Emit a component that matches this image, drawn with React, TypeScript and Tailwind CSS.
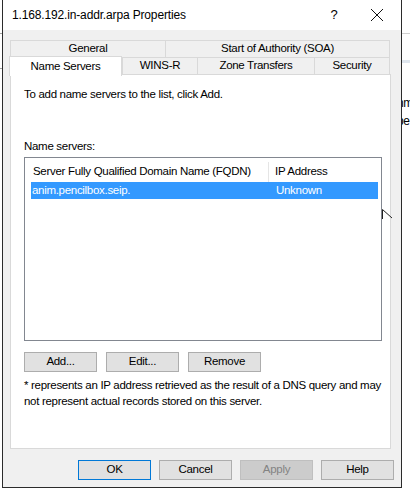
import React from "react";

const font = { fontFamily: '"Liberation Sans", Arial, sans-serif' };

const Btn = ({ label, kind }: { label: string; kind?: "default" | "disabled" }) => {
    const base = "h-[20px] w-[73px] flex items-center justify-center text-[11.5px] border";
    if (kind === "default") return <div className={`${base} bg-[#e1e1e1] border-[#0078d7] text-black`}>{label}</div>;
    if (kind === "disabled") return <div className={`${base} bg-[#cccccc] border-[#bfbfbf] text-[#838383]`}>{label}</div>;
    return <div className={`${base} bg-[#e1e1e1] border-[#adadad] text-black`}>{label}</div>;
};

const App = () => {
    return (
        <div className="w-[410px] h-[490px] bg-white flex overflow-hidden relative text-black tracking-[-0.3px]" style={font}>
            {/* background strip left */}
            <div className="w-[2px] h-full flex flex-col">
                <div className="h-[33px]" />
                <div className="h-px bg-[#a0a0a0]" />
                <div className="h-[34px]" />
                <div className="h-px bg-[#a0a0a0]" />
            </div>

            {/* dialog */}
            <div className="w-[400px] h-[488px] border-x border-b border-[#2b2b2b] flex flex-col">
                {/* title bar */}
                <div className="h-[30px] bg-white flex items-center pl-[9px] shrink-0">
                    <span className="text-[12px] flex-1 tracking-[-0.15px]">1.168.192.in-addr.arpa Properties</span>
                    <span className="text-[13px] w-[20px] mr-[26px] text-center">?</span>
                    <svg width="14" height="14" viewBox="0 0 14 14" className="mr-[17px]">
                        <path d="M1 1 L13 13 M13 1 L1 13" stroke="#111" strokeWidth="1" fill="none" />
                    </svg>
                </div>

                {/* body */}
                <div className="flex-1 bg-[#f0f0f0] pl-[7px] pr-[7px] pt-[10px] flex flex-col">
                    {/* tab row 1 */}
                    <div className="flex h-[17px] text-[11.5px] w-[380px]">
                        <div className="w-[155px] border-t border-l border-[#d9d9d9] flex items-center justify-center">General</div>
                        <div className="flex-1 border-t border-l border-r border-[#d9d9d9] flex items-center justify-center">Start of Authority (SOA)</div>
                    </div>
                    {/* tab row 2 */}
                    <div className="flex h-[17px] text-[11.5px] w-[380px] border-t border-[#d9d9d9] relative">
                        <div className="absolute left-[-1px] top-[-2px] w-[113px] h-[20px] bg-white border-t border-l border-r border-[#d9d9d9] flex items-center justify-center z-10">Name Servers</div>
                        <div className="w-[112px]" />
                        <div className="w-[75px] border-l border-[#d9d9d9] flex items-center justify-center">WINS-R</div>
                        <div className="w-[117px] border-l border-[#d9d9d9] flex items-center justify-center">Zone Transfers</div>
                        <div className="flex-1 border-l border-r border-[#d9d9d9] flex items-center justify-center">Security</div>
                    </div>

                    {/* tab panel */}
                    <div className="w-[381px] h-[375px] bg-white border border-[#d9d9d9] pl-[13px] pt-[11px] flex flex-col text-[11.5px]">
                        <div className="leading-[16px]">To add name servers to the list, click Add.</div>
                        <div className="leading-[16px] mt-[36px]">Name servers:</div>
                        <div className="w-[358px] h-[184px] mt-[3px] border border-[#828790] pt-[4px] pl-[6px] pr-[3px] flex flex-col">
                            <div className="flex h-[20px] items-center">
                                <div className="w-[238px] pl-[2px] border-r border-[#e5e5e5] h-full flex items-center">Server Fully Qualified Domain Name (FQDN)</div>
                                <div className="pl-[6px]">IP Address</div>
                            </div>
                            <div className="flex h-[17px] items-center bg-[#3399ff] text-white">
                                <div className="w-[238px] pl-[1px]">anim.pencilbox.seip.</div>
                                <div className="pl-[7px]">Unknown</div>
                            </div>
                        </div>
                        <div className="flex gap-[9px] mt-[11px]">
                            <Btn label="Add..." />
                            <Btn label="Edit..." />
                            <Btn label="Remove" />
                        </div>
                        <div className="mt-[5px] leading-[16px] w-[366px]">
                            * represents an IP address retrieved as the result of a DNS query and may not represent actual records stored on this server.
                        </div>
                    </div>

                    {/* dialog buttons */}
                    <div className="flex justify-end gap-[8px] mt-[11px]">
                        <Btn label="OK" kind="default" />
                        <Btn label="Cancel" />
                        <Btn label="Apply" kind="disabled" />
                        <Btn label="Help" />
                    </div>
                </div>
            </div>

            {/* background strip right */}
            <div className="flex-1 h-full flex flex-col text-[12px] overflow-hidden">
                <div className="h-[33px]" />
                <div className="h-px bg-[#d0d0d0]" />
                <div className="h-[26px]" />
                <div className="h-[3px] bg-[#dfe6ee]" />
                <div className="h-[31px]" />
                <div className="leading-[18px] -ml-[5px]">nm</div>
                <div className="leading-[18px] -ml-[5px]">pe</div>
            </div>

            {/* mouse cursor */}
            <svg className="absolute left-[382px] top-[209px]" width="12" height="14" viewBox="0 0 12 14">
                <path d="M0.5 0.5 L0.5 10 M0.5 0.5 L10 9" stroke="#222" strokeWidth="1" fill="none" />
            </svg>
        </div>
    );
};

export default App;
